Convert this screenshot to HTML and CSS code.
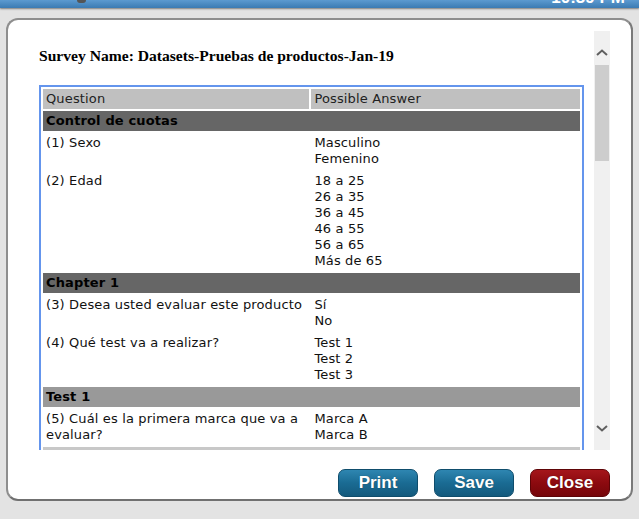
FILE: index.html
```html
<!DOCTYPE html>
<html lang="es">
<head>
<meta charset="utf-8">
<title>Survey</title>
<link rel="stylesheet" href="styles.css">
</head>
<body>
<div class="topbar">
  <span class="topicon"></span>
  <span class="clock">10:39 PM</span>
</div>
<div class="dialog">
  <div class="dlg-body">
    <div class="pane">
      <h1 class="title">Survey Name: Datasets-Pruebas de productos-Jan-19</h1>
      <table class="survey">
        <colgroup><col class="c1"><col class="c2"></colgroup>
        <tr class="head"><td>Question</td><td>Possible Answer</td></tr>
        <tr class="sec"><td colspan="2">Control de cuotas</td></tr>
        <tr><td>(1) Sexo</td><td>Masculino<br>Femenino</td></tr>
        <tr><td>(2) Edad</td><td>18 a 25<br>26 a 35<br>36 a 45<br>46 a 55<br>56 a 65<br>Más de 65</td></tr>
        <tr class="sec"><td colspan="2">Chapter 1</td></tr>
        <tr><td>(3) Desea usted evaluar este producto</td><td>Sí<br>No</td></tr>
        <tr><td>(4) Qué test va a realizar?</td><td>Test 1<br>Test 2<br>Test 3</td></tr>
        <tr class="sec mid"><td colspan="2">Test 1</td></tr>
        <tr><td>(5) Cuál es la primera marca que va a evaluar?</td><td>Marca A<br>Marca B</td></tr>
        <tr class="sec light"><td colspan="2">Marca A</td></tr>
        <tr><td>(6) Qué le pareció el producto?</td><td>Muy bueno<br>Bueno<br>Regular<br>Malo</td></tr>
      </table>
    </div>
    <div class="scrollbar">
      <div class="sb-btn up">
        <svg width="12" height="7" viewBox="0 0 12 7"><path d="M1 6 L6 1.5 L11 6" fill="none" stroke="#5f5f5f" stroke-width="2"/></svg>
      </div>
      <div class="sb-track"><div class="sb-thumb"></div></div>
      <div class="sb-btn down">
        <svg width="12" height="7" viewBox="0 0 12 7"><path d="M1 1 L6 5.5 L11 1" fill="none" stroke="#5f5f5f" stroke-width="2"/></svg>
      </div>
    </div>
  </div>
  <div class="footer">
    <button class="btn blue">Print</button>
    <button class="btn blue">Save</button>
    <button class="btn red">Close</button>
  </div>
</div>
</body>
</html>
```
FILE: styles.css
```css
html, body {
  margin: 0;
  padding: 0;
}
body {
  width: 639px;
  height: 519px;
  background: #e3e3e3;
  overflow: hidden;
  font-family: "DejaVu Sans", Verdana, sans-serif;
}
.topbar {
  height: 8px;
  background: linear-gradient(#5c9ad0, #3b7bb3);
  box-shadow: 0 1px 2px rgba(0,0,0,0.45);
  display: flex;
  justify-content: space-between;
  overflow: hidden;
  padding: 0 14px 0 77px;
}
.topicon {
  width: 9px;
  height: 3px;
  background: #555;
  border-radius: 0 0 5px 5px;
}
.clock {
  color: #fff;
  font: bold 17px/16px "Liberation Sans", Arial, sans-serif;
  margin-top: -10px;
}
.dialog {
  box-sizing: border-box;
  margin: 10px 6px 0 6px;
  height: 483px;
  background: #fff;
  border: 2px solid #8e8e8e;
  border-bottom-color: #707070;
  border-right-color: #7a7a7a;
  border-radius: 12px;
  padding: 11px 21px 0 10px;
}
.dlg-body {
  display: flex;
  height: 419px;
}
.pane {
  flex: 1;
  overflow: hidden;
  padding: 0 10px 0 21px;
}
.title {
  margin: 0 0 19px 0;
  padding-top: 15px;
  font: bold 15.6px/20px "Liberation Serif", "Times New Roman", serif;
  color: #000;
}
.survey {
  width: 100%;
  border: 2px solid #6495ed;
  border-spacing: 2px;
  table-layout: fixed;
  font-size: 13px;
  line-height: 16px;
  letter-spacing: 0.14px;
  color: #111;
}
.c1 {
  width: 49.8%;
}
.survey td {
  padding: 2px 3px;
  vertical-align: top;
}
.head td {
  background: #c0c0c0;
  color: #222;
}
.sec td {
  background: #666;
  font-weight: bold;
  color: #000;
}
.sec.mid td {
  background: #999;
}
.sec.light td {
  background: #c8c8c8;
}
.scrollbar {
  width: 16px;
  background: #f0f0f0;
  display: flex;
  flex-direction: column;
}
.sb-btn {
  height: 34px;
  display: flex;
  justify-content: center;
  box-sizing: border-box;
}
.sb-btn.up {
  align-items: flex-end;
  padding-bottom: 9px;
}
.sb-btn.down {
  align-items: flex-start;
  padding-top: 9px;
}
.sb-track {
  flex: 1;
  padding: 0 1px;
}
.sb-thumb {
  height: 96px;
  background: #cdcdcd;
}
.footer {
  display: flex;
  justify-content: flex-end;
  gap: 16px;
  margin-top: 19px;
}
.btn {
  width: 80px;
  height: 28px;
  border-radius: 7px;
  border: 1px solid #0f4d6c;
  color: #fff;
  font: bold 17px/24px "Liberation Sans", Arial, sans-serif;
  padding: 0;
  text-shadow: 0 0 1px rgba(0,0,0,0.4);
}
.btn.blue {
  background: linear-gradient(#2e86b1, #1a6b93 50%, #145a7d);
}
.btn.red {
  background: linear-gradient(#a5161b, #8c0a0f 50%, #76060a);
  border-color: #5e0407;
}
```
